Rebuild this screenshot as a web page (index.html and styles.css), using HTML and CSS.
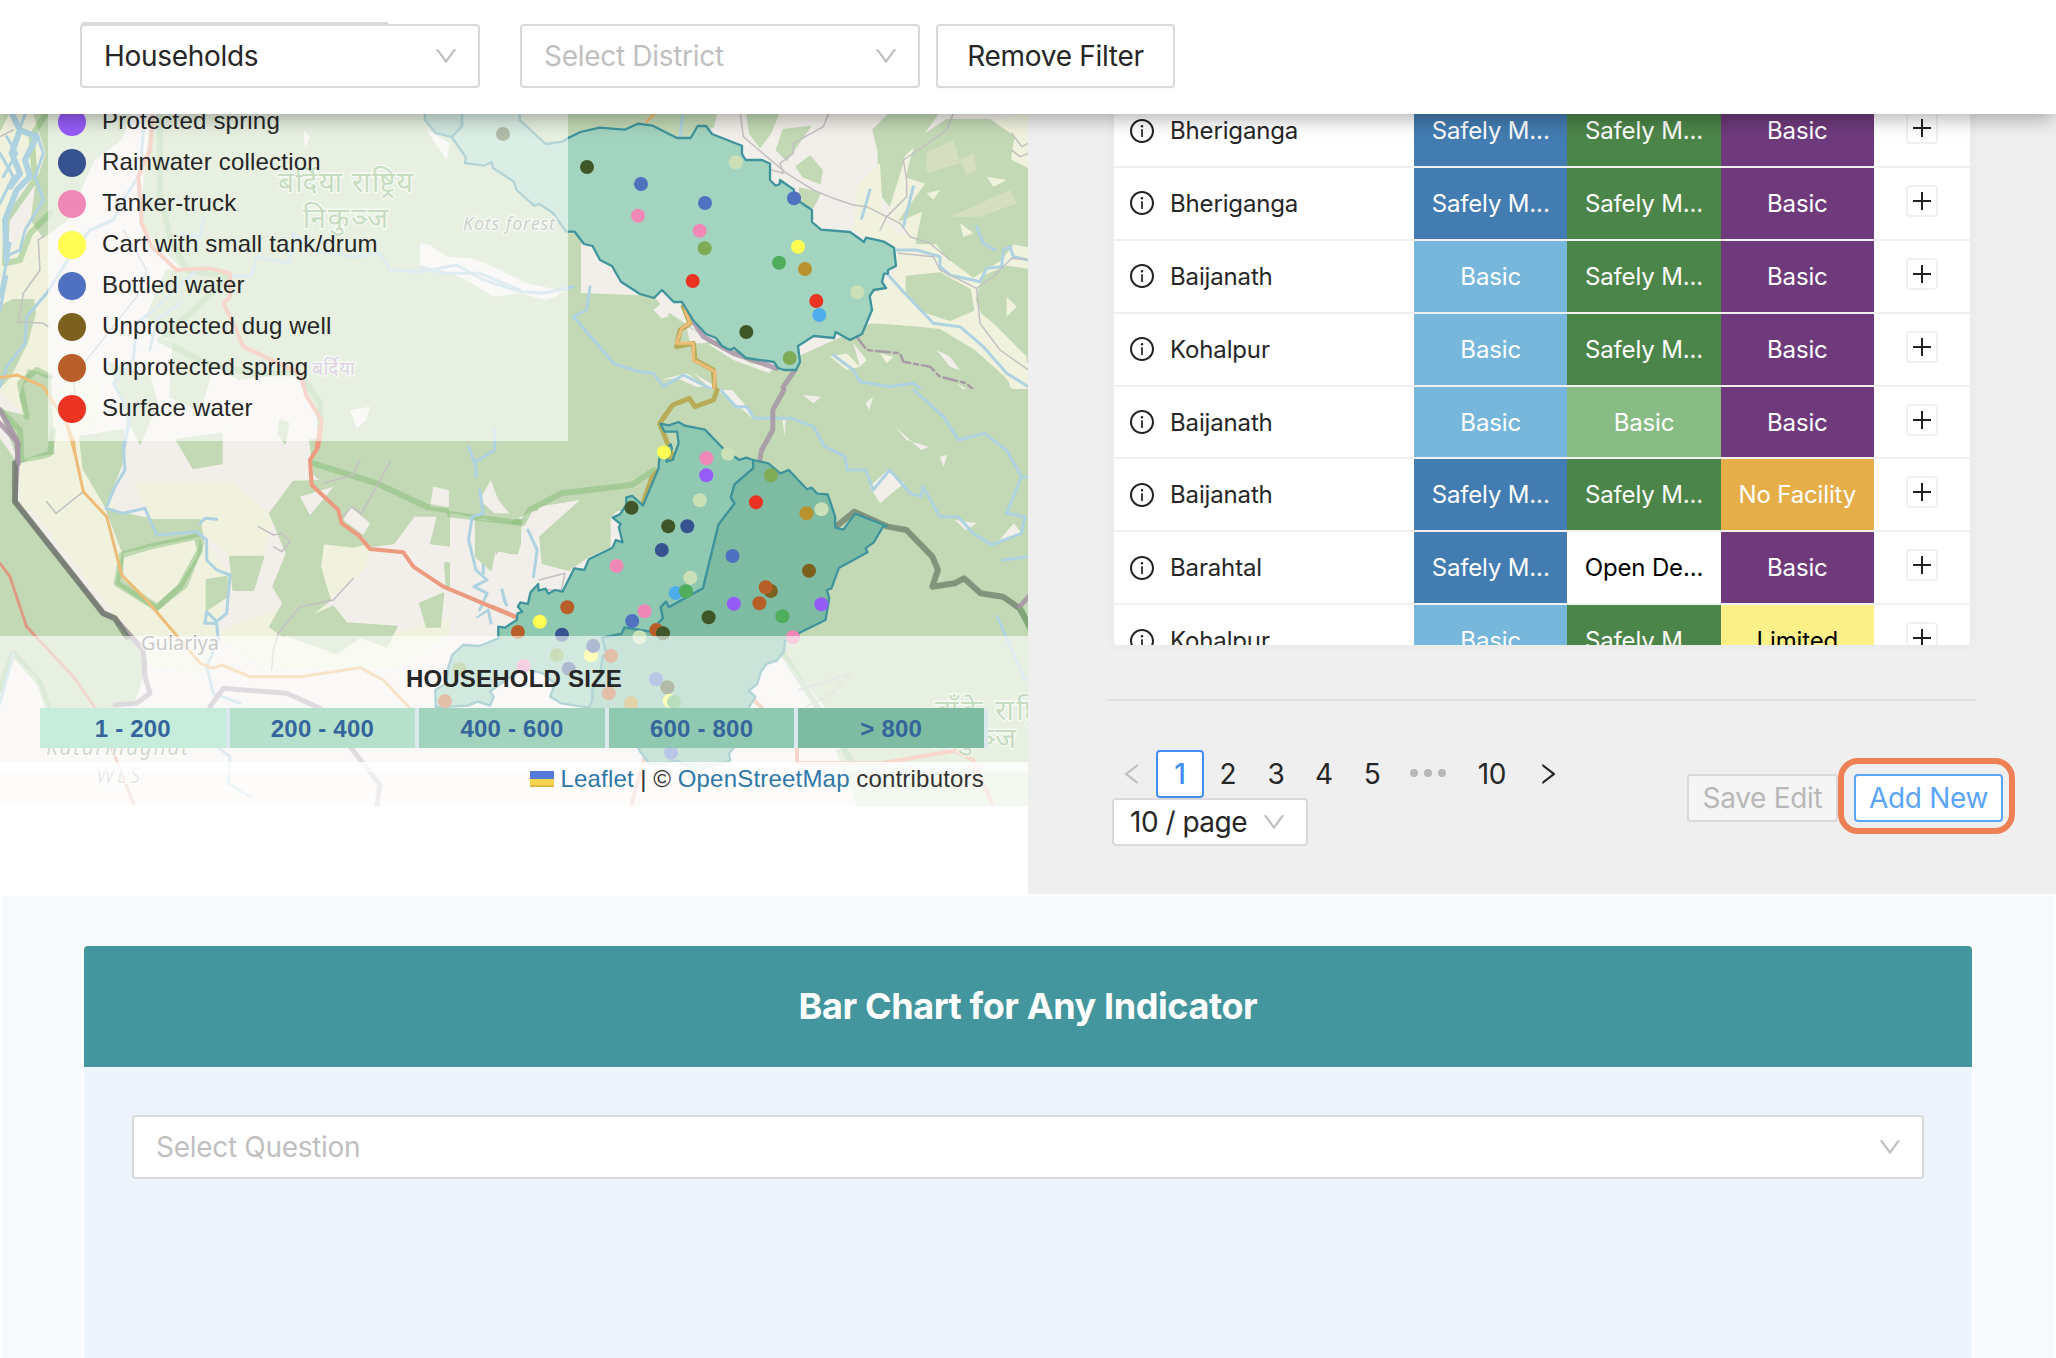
FILE: index.html
```html
<!DOCTYPE html>
<html lang="en">
<head>
<meta charset="utf-8">
<title>Households</title>
<link rel="stylesheet" href="styles.css">
</head>
<body>
<svg class="defs" width="0" height="0">
  <symbol id="down" viewBox="64 64 896 896"><path d="M884 256h-75c-5.100 0-9.900 2.500-12.900 6.600L512 654.200 227.900 262.600c-3-4.100-7.800-6.600-12.900-6.600h-75c-6.500 0-10.300 7.400-6.500 12.700l352.600 486.100c12.800 17.600 39 17.600 51.700 0l352.600-486.100c3.900-5.300.1-12.700-6.400-12.700z"/></symbol>
  <symbol id="left" viewBox="64 64 896 896"><path d="M724 218.300V141c0-6.700-7.700-10.400-12.900-6.300L260.300 486.800a31.860 31.860 0 0 0 0 50.300l450.800 352.100c5.300 4.100 12.900.4 12.900-6.300v-77.300c0-4.900-2.300-9.600-6.100-12.600l-360-281 360-281.100c3.800-3 6.100-7.700 6.100-12.600z"/></symbol>
  <symbol id="right" viewBox="64 64 896 896"><path d="M765.700 486.800L314.900 134.700A7.970 7.970 0 0 0 302 141v77.300c0 4.900 2.300 9.600 6.100 12.600l360 281.100-360 281.100c-3.900 3-6.100 7.700-6.100 12.600V883c0 6.700 7.700 10.400 12.900 6.300l450.800-352.100a31.960 31.960 0 0 0 0-50.400z"/></symbol>
  <symbol id="info" viewBox="64 64 896 896"><path d="M512 64C264.600 64 64 264.600 64 512s200.600 448 448 448 448-200.600 448-448S759.400 64 512 64zm0 820c-205.400 0-372-166.600-372-372s166.600-372 372-372 372 166.600 372 372-166.600 372-372 372z"/><path d="M464 336a48 48 0 1 0 96 0 48 48 0 1 0-96 0zm72 112h-48c-4.400 0-8 3.600-8 8v272c0 4.400 3.600 8 8 8h48c4.400 0 8-3.600 8-8V456c0-4.400-3.600-8-8-8z"/></symbol>
</svg>

<header class="filters">
  <div class="select source"><span>Households</span><svg class="caret"><use href="#down"/></svg></div>
  <div class="select district"><span class="placeholder">Select District</span><svg class="caret"><use href="#down"/></svg></div>
  <button class="btn remove">Remove Filter</button>
</header>

<main class="panes">
  <section class="map">
    <svg class="map-canvas" viewBox="0 114 1028 692">
      <rect class="land" x="0" y="114" width="1028" height="692"/>

      <!-- forests and farmland, north-west -->
      <g transform="translate(0 110) scale(.33333)">
        <path class="farm" d="M0 0H150V400L250 560 210 900 240 1000 420 1200H60L60 900 0 850z"/>
        <path class="farm" d="M150 800L300 820 300 900 240 1000 200 980z"/>
        <path class="land" d="M60 200L110 240 80 340 20 450 10 330zM150 380L280 320 420 500 300 760 150 850zM250 1000L400 990 420 1200H350z"/>
        <path class="wood" d="M100 0H400L360 90 280 150 200 330 130 380 95 330 110 220 140 130zM0 590L40 570 100 570 105 610 80 700 30 800 0 830zM85 780L150 800 160 1030 90 1040 60 1060 0 900 80 920 60 860zM0 60L20 20 30 0H0z"/>
        <path class="wood" d="M480 0H1740V1200H1060L930 1080 960 940 900 800 720 810 640 760 600 900 510 860 520 700 440 620 500 480 560 490 420 340 450 60zM240 980L370 960 370 1050 310 1200 260 1160zM330 760L450 800 470 880 420 1000 380 920zM530 990L665 970 665 1060 580 1075z"/>
        <path class="land" d="M720 810L880 790 930 880 960 960 930 1120 870 1200H760L670 1130 670 970 760 950zM1260 400L1290 405 1340 440 1420 445 1500 480 1580 520 1700 545 1640 570 1560 550 1480 560 1400 510 1340 485 1260 465zM1050 900L1110 890 1100 930 1070 955zM1050 1020L1080 1050 1110 1080 1090 1100 1050 1090zM1140 1040L1175 1050 1160 1100 1140 1090zM910 60L930 80 915 115zM1280 60L1350 100 1340 150z"/>
        <path class="wood" d="M840 930L865 940 855 1000 835 970z"/>
        <path class="soft" d="M480 0L480 250 510 380 560 480 690 500M145 0L95 80 105 210 20 330 15 460 60 450 90 370 150 310M690 500L480 690 620 760 760 790 900 790 960 880 960 960M0 900L60 960 65 1060 150 1030 160 960M80 920L60 820 110 780 150 800"/>
      </g>

      <!-- Gulariya plains -->
      <g transform="translate(0 420) scale(.33333)">
        <path class="wood" d="M0 60L50 130 50 250 310 580 400 640 440 730 400 850 350 860 300 900 150 870 110 770 40 700 0 820z"/>
        <path class="farm" d="M60 130L220 100 320 270 450 300 600 340 690 470 650 640 620 760 460 740 420 670 340 580 70 240z"/>
        <path class="farm" d="M400 190L700 190 820 290 770 480 690 410 610 340 450 290zM960 360L1110 370 1100 440 1040 500 990 530 950 440zM640 640L850 560 1000 560 1100 660 1480 560 1200 740 800 750z"/>
        <path class="wood" d="M320 270L460 300 600 300 610 370 560 500 470 570 350 490 370 400zM690 410L790 410 760 510 700 510zM880 185L1050 180 1100 370 1060 380 970 370 960 440 990 540 850 650 810 620 850 550 820 500 860 400 810 280zM860 620L1000 560 1040 610 1190 620 1160 680 1080 650 1010 700 860 645zM1260 550L1330 520 1320 620 1280 620zM1335 430L1390 430 1380 510 1340 500zM930 60H1560V270L1410 300 1380 380 1290 370 1240 290 1180 370 1100 380 1090 340 1010 280 1050 180 940 140zM1470 290L1560 300 1560 400 1490 400zM620 480L680 470 680 530 620 570z"/>
        <path class="farm" d="M370 400L450 380 600 350 590 410 540 490 470 550 370 480z"/>
        <path class="land" d="M900 230L1000 200 960 250 930 285zM1300 200L1390 220 1390 270 1290 260zM1240 290L1310 290 1290 370 1240 370zM1440 200L1480 180 1490 220 1540 260 1470 280zM1050 260L1110 310 1090 345 1030 300z"/>
        <path class="soft" d="M350 490L365 405 450 380 590 350 600 390 540 500 470 565zM940 130L1130 190 1280 260 1560 305M350 490L430 540M0 810L40 700 120 790 150 880"/>
        <path class="river" d="M390 0L370 80 375 150 345 200 318 265 370 280 435 265 470 345 590 335 620 360 620 420 650 450 690 465 680 580 650 605 620 575 615 610 650 610 655 660 620 740 640 820 720 850M600 310L615 295 650 298M1410 80L1430 130 1430 170M1480 30L1480 80 1430 130M1440 200L1450 260 1410 290 1415 380 1450 420 1450 480 1425 500 1465 490 1440 540 1430 590 1465 570 1475 620M1500 510L1520 555M40 700L0 850M650 980L690 1010 685 1090 750 1130"/>
        <path class="track" d="M140 245L168 280 250 215M775 320L820 345 845 340 870 365 845 395 820 380M835 640L900 560 1000 540 1060 475M815 750L820 690 835 640M970 190L1060 165 1080 120M1030 290L1055 260 1085 280 1170 125"/>
        <path class="border-line" d="M0 10L55 70 45 245 310 580 345 595 430 690 435 770 450 820 410 850 345 855M630 860L670 805 860 820 960 865 1140 1095 1130 1160"/>
        <path class="border-shade" d="M45 130V245L310 580 345 595 380 650"/>
        <path class="secondary" d="M195 0L220 60 225 100 250 215 320 290 365 465 435 535 575 700 600 730 640 745 665 735 750 770 900 770 1080 743 1150 780 1230 865 1420 985 1560 1070"/>
        <path class="primary" d="M965 0L955 80 930 120 935 195 1015 270 1025 310 1075 345 1110 387 1210 397 1240 440 1330 500 1560 595"/>
        <path class="primary thin" d="M0 430L30 470 80 620 220 770 290 870 400 1150"/>
      </g>

      <!-- upper left rivers and roads -->
      <g transform="translate(0 110) scale(.33333)">
        <path class="river thick" d="M30 0L60 60 35 130 60 190 30 230M60 60L110 80 75 150 90 200 50 240 15 330 20 450"/>
        <path class="river" d="M0 130L40 200 0 280M20 80L50 130 10 200M80 0L50 80M110 70L130 130 105 200 130 270 75 360 60 420 15 440M0 560L30 400M0 600L20 500M430 60L420 190 370 270 340 330 270 360 210 440 140 550 80 620 75 700 20 770 0 830M690 500L755 495 770 440 870 460 880 370 940 420 1060 440 1140 430 1170 480 1260 485 1370 465 1450 510 1560 545 1630 550 1720 530M1260 470L1330 490 1440 490 1560 540M590 480L460 600 410 640 400 750 340 820 390 910 370 1030M540 580L470 630 450 720M540 370L600 380 610 325"/>
        <path class="track" d="M0 80L40 60M130 380L115 390 120 480 70 550 55 635 130 640 145 650M370 360L440 480 410 560 220 800 225 850"/>
        <path class="primary" d="M460 0L450 120 415 200 425 340 455 410 530 480 630 475 690 490 690 560 670 580 705 650 730 710 900 790 920 860 965 930 950 1010"/>
        <path class="secondary" d="M0 803L50 795 130 830 200 940 225 1030"/>
        <path class="border-line" d="M0 900L50 990 55 1060"/>
      </g>

      <!-- eastern hills -->
      <g transform="translate(640 110) scale(.33333)">
        <path class="wood" d="M-240 0H230L220 50 120 90 -240 110zM320 0L420 0 390 70 360 110 330 70zM430 60L510 50 440 150 410 120zM510 140L545 180 540 220 490 200 470 170zM480 235L540 250 520 290 480 290zM700 60L760 0 900 0 830 100 790 140 800 230 760 300 720 250 715 120z"/>
        <path class="farm" d="M650 230L720 160 730 330 780 370 900 410 1170 400V850L900 700 700 650 690 560 780 470 640 360zM740 320L800 130 1170 0V430L890 430z"/>
        <path class="wood" d="M830 90L920 30 1050 30 1120 80 1110 150 1170 180V410L1120 400 1080 450 1000 500 920 440 890 400 830 400 850 300 780 330 860 220 800 200zM800 500L900 490 990 540 1000 600 930 630 840 600 800 550zM1030 500L1100 470 1170 480V760L1110 720 1040 640 1010 570zM700 640L900 660 1000 720 1090 800 1170 900V1200H-240V550L40 560 70 600 190 680 400 780 480 740z"/>
        <path class="rock" d="M860 130L940 90 960 160 860 190zM960 150L1000 130 1010 180 980 195zM930 320L1110 240 1130 280 1020 320z"/>
        <path class="farm" d="M700 610L830 600 900 640 860 650 690 640zM1010 600L1060 640 1160 740V800L1080 740z"/>
        <path class="land" d="M40 600L90 560 85 620 65 625zM140 650L220 690 190 700 150 700zM160 790L230 830 300 870 360 890 350 920 300 890 240 860zM200 700L270 720 330 760 400 770 390 790 280 750zM480 860L540 860 520 880zM60 810L140 790 200 830 170 830 110 805zM580 890L600 880 610 900zM680 960L700 955 695 980zM740 880L790 890 820 930 800 925zM970 970L1030 975 990 995zM420 930L435 935 430 975zM890 720L930 740 960 780 930 770zM1040 850L1110 880 1160 920 1130 920zM640 700L680 750 660 770z"/>
        <path class="farm" d="M570 740L620 730 660 770 620 780zM720 730L760 740 740 760zM950 820L1020 860 1000 870zM1100 790L1160 850 1160 880 1110 830zM790 340L830 380 800 380zM1040 200L1100 210 1060 230zM960 340L1000 370 970 380zM1100 560L1130 590 1100 620zM860 250L900 240 880 270z"/>
        <path class="river" d="M770 420L830 420 900 440 900 470 930 495 1020 515 1040 475 1085 470 1090 420 1110 410 1120 440 1165 450M740 490L790 545 880 640 960 650 1030 710 1100 790 1165 830M580 735L640 780 660 815 750 830 820 820 870 860 930 980 1020 970 1070 990 1100 1040M-200 620L-160 600 -150 530M-200 620L-130 700 -80 760 -20 780 0 785 40 790 70 830 130 795 200 830 250 855 300 895 330 875 335 910 390 930 510 940 530 980 580 1020M130 0L120 80M690 240L665 325M1010 350L1030 400 1065 420M820 230L790 350"/>
        <path class="track" d="M300 0L310 80 380 140 440 190 520 240 580 265 640 285 680 290 780 340 810 380 870 400 930 450M570 0L550 50 460 100 460 130 420 160 430 190 360 170M940 10L920 60 850 110 790 150 800 210 800 260 740 320 720 360M775 430L880 440 900 480 1010 535 1060 500 1115 445 1165 450M1010 535L1020 640 1080 720 1165 780M1115 70L1145 110 1165 100M1115 120L1140 140 1165 130"/>
        <path class="border-dash" d="M650 680L680 720 780 730 790 755 870 770 900 800 980 820 1010 850 1060 855 1110 885 1165 930"/>
        <path class="border-line" d="M465 780L430 830 425 860 395 910 395 970 370 1000 345 1080 330 1130M130 590L190 680 280 730 410 775"/>
        <path class="gold-soft" d="M130 590L150 640 120 660 110 710 160 700 165 750 220 780 225 850 215 870 160 890 150 870 100 885 60 935"/>
        <path class="secondary" d="M135 600L150 640 125 655 110 700 160 700 160 750 225 785 220 870 165 885 110 880 65 935M55 0L20 35"/>
      </g>

      <!-- southern woods, rivers and borders around the districts -->
      <g transform="translate(450 390) scale(.37106 .33333)">
        <path class="wood" d="M0 0H1570V1250H1100L1000 950 900 800 700 600 480 330 430 380 430 470 370 500 320 540 250 520 240 400 350 330 240 350 150 400 40 370 0 390z"/>
        <path class="land" d="M720 0L790 60 820 90 800 50 760 0zM110 270L130 330 160 370 120 370 80 330zM210 400L240 460 240 520 170 600 120 640 0 740V370L60 380 80 480 60 540 110 560 130 480 180 500zM1130 290L1180 240 1225 280 1190 310 1160 340zM240 350L350 330 280 400 210 470zM950 15L1000 20 980 40zM1360 390L1420 400 1390 420zM895 80L905 85 902 140zM1480 450L1520 400 1540 430zM1120 40L1140 20 1130 60zM1200 110L1230 150 1290 170 1270 180zM1320 200L1340 195 1330 230z"/>
        <path class="wood" d="M70 390L190 410 180 490 120 480 110 540 70 500z"/>
        <path class="land" d="M0 740L180 680 420 740 300 960 480 1060 530 1120 760 1110 830 1250H0zM890 790L1010 950 1060 1080 950 1060 860 880z"/>
        <path class="soft" d="M0 373L195 400 215 360 300 310 490 285 550 240M885 770L990 950 1080 1110"/>
        <path class="river" d="M50 170L70 230 70 260M120 115V180L70 215M80 300L90 370 60 380 50 450 70 540 100 570 65 590 100 610 80 660M210 420L235 480 225 560M140 600L150 640M730 0L770 50 800 50 820 85 920 85 980 110 1010 170 1065 200 1070 240 1120 240 1140 300 1185 240 1240 310 1270 320 1275 290 1320 380 1370 380 1410 430 1460 465 1540 430 1550 380 1500 370 1540 260 1500 180 1440 130 1370 150 1330 80 1250 0M1490 510L1560 500M1540 260L1563 262M1475 680L1510 770 1550 870"/>
        <path class="track" d="M240 570L310 550 300 600 260 600M940 900L1080 850 1030 910 960 950"/>
        <path class="border-shade" d="M1040 410L1090 365 1180 410 1230 420 1300 500 1315 540 1300 590 1360 580 1385 565 1430 610 1490 620 1535 655 1563 710"/>
        <path class="border-line" d="M900 0L870 60 870 120 840 180 835 210M1535 650L1563 615"/>
        <path class="gold-soft" d="M720 0L710 30 660 50 645 25 600 45 565 100 600 200 545 260 520 340"/>
        <path class="primary" d="M0 598L178 682M820 930L845 960 935 1060 935 1120 1160 1120 1360 1082 1410 1110 1460 1240M525 1100L490 1240"/>
        <path class="soft" d="M1540 660L1563 720"/>
      </g>

      <!-- district areas -->
      <path class="area a3" d="M545.700 144L562.600 141.700 568 138 580.400 132 599.600 127.700 624.500 129.700 638 123.700 652.700 125.700 677 138H690.700L697.700 126H706L712 134 742 145.700V154L745.700 160H762L770 163.700V180L775.700 185.700 779.700 184 780 180 794 189.700V198L812 210V222L821 229.700 850 232 864 242 866 237.700 884 241.700 894 247.700 896 266 888 270V273.700H884L882 282 886 288 873.700 290 869.700 296 872 310 862 334 850 340 835.700 332 834 338 813.700 336 798 346 800 362 796 370H784L778 368 774 362 746 358 734 348 730 350 722 346 716 338 706 334 693.700 321 682 302H673.700L662 290 654 298 640 294 621 281.700 612 266 600 260 592.600 246 584 244 574.700 231.700H566L553 213 539.600 204 534 205.700 516.600 190 514 181.700 493 168 491.800 162 484 165.700 465 163 465.700 157 451.600 137 462 126V100H519.700V120z"/>
      <path class="area a4" d="M424.800 100V120L436 133 451.600 137 462 126V100z"/>
      <g transform="translate(450 390) scale(.37106 .33333)">
        <path class="area a4" d="M567 101L590 106 616 96 633 107 687 119 740 180 780 210 798 203 817 210V235L767 283 757 322 767 341 724 403 682 595 590 652 582 635 568 652 574 685 540 725 470 713 462 732 410 744 422 790 412 800 405 850 384 900V930L374 953 300 940 270 920 283 880 250 850 200 835 150 870 108 905 118 920 108 947 75 935 48 947 -38 952 -40 900 -9 880 -5 835 6 795 35 765 80 768 130 745V710L148 713 180 690 182 670 195 665 183 650 190 637 210 642 217 607 238 582V602L258 596 265 611 283 600 303 605 335 535 362 540 374 508 438 473 447 450 465 457 455 412 460 402 438 383 458 373 475 345V322L492 318 520 347 562 235 565 195 595 163 598 175 583 215 600 210 616 160 612 125H578z"/>
        <path class="area a5" d="M817 210L858 220 890 250 913 240 962 298 975 293 990 311 1018 313 1038 380V413L1060 419 1092 371 1177 408H1168L1142 457 1120 475 1125 487 1048 534 1028 595 1016 600 1022 625 1012 690 945 727 903 752 900 785 880 812 853 822 838 845 828 882 805 902 823 920 805 953 790 1010 765 1074 752 1090 755 1112 680 1135 630 1125 615 1112 540 1125 512 1085 508 1074 374 1000V953L384 930V900L405 850 412 800 422 790 410 744 462 732 470 713 540 725 574 685 568 652 582 635 590 652 682 595 724 403 767 341 757 322 767 283 817 235z"/>
      </g>

      <!-- water points -->
      <g class="dark"><circle cx="503" cy="134" r="7"/><circle cx="587" cy="167" r="7"/><circle cx="746.300" cy="332" r="7"/><circle cx="631.500" cy="507.700" r="7"/><circle cx="668.200" cy="526.300" r="7"/><circle cx="708.600" cy="617.300" r="7"/><circle cx="667.400" cy="687.300" r="7"/></g>
      <g class="blue"><circle cx="641" cy="184" r="7"/><circle cx="705" cy="203" r="7"/><circle cx="794" cy="198.300" r="7"/><circle cx="732.500" cy="556" r="7"/><circle cx="632.200" cy="621" r="7"/><circle cx="656" cy="679.300" r="7"/><circle cx="671" cy="752.700" r="7"/></g>
      <g class="pink"><circle cx="638" cy="215.700" r="7"/><circle cx="699.700" cy="230.700" r="7"/><circle cx="706.500" cy="458.300" r="7"/><circle cx="616.500" cy="566" r="7"/><circle cx="793" cy="637.300" r="7"/><circle cx="644.500" cy="611.300" r="7"/><circle cx="523.500" cy="666" r="7"/></g>
      <g class="olive"><circle cx="704.700" cy="248.300" r="7"/><circle cx="789.700" cy="358" r="7"/><circle cx="771" cy="475.300" r="7"/><circle cx="556.900" cy="655" r="7"/><circle cx="459.300" cy="669.300" r="7"/></g>
      <g class="red"><circle cx="692.700" cy="281" r="7"/><circle cx="816.300" cy="301" r="7"/><circle cx="756" cy="502.300" r="7"/></g>
      <g class="pale"><circle cx="735.700" cy="162.300" r="7"/><circle cx="857.300" cy="292.300" r="7"/><circle cx="728" cy="453.700" r="7"/><circle cx="699.800" cy="500.300" r="7"/><circle cx="690.300" cy="577.700" r="7"/><circle cx="821.500" cy="509.300" r="7"/><circle cx="639.600" cy="637.300" r="7"/></g>
      <g class="yellow"><circle cx="798" cy="246.700" r="7"/><circle cx="664" cy="452.300" r="7"/><circle cx="539.800" cy="621.700" r="7"/><circle cx="591" cy="655.300" r="7"/><circle cx="669.700" cy="700.700" r="7"/></g>
      <g class="sky"><circle cx="819.300" cy="315" r="7"/><circle cx="675.700" cy="593" r="7"/></g>
      <g class="green"><circle cx="779" cy="262.700" r="7"/><circle cx="686" cy="591.300" r="7"/><circle cx="782.300" cy="616.300" r="7"/><circle cx="674" cy="702" r="7"/></g>
      <g class="mustard"><circle cx="805" cy="269" r="7"/><circle cx="806.500" cy="513.300" r="7"/><circle cx="631" cy="703.300" r="7"/></g>
      <g class="purple"><circle cx="706.300" cy="475.300" r="7"/><circle cx="733.800" cy="603.700" r="7"/><circle cx="821.300" cy="604.300" r="7"/></g>
      <g class="navy"><circle cx="687.300" cy="526.300" r="7"/><circle cx="661.800" cy="550" r="7"/><circle cx="562" cy="634.700" r="7"/><circle cx="593.200" cy="646" r="7"/><circle cx="568.700" cy="668.700" r="7"/></g>
      <g class="brown"><circle cx="809" cy="570.700" r="7"/><circle cx="770.800" cy="591" r="7"/></g>
      <g class="rust"><circle cx="765.800" cy="587.300" r="7"/><circle cx="759.400" cy="603.300" r="7"/><circle cx="656.300" cy="630" r="7"/><circle cx="567.300" cy="607.300" r="7"/><circle cx="517.900" cy="632" r="7"/><circle cx="611" cy="655.700" r="7"/><circle cx="445" cy="701" r="7"/><circle cx="608.800" cy="693.300" r="7"/></g>
      <g class="dark"><circle cx="663" cy="633.300" r="7"/></g>

      <!-- place names -->
      <g class="place park"><text x="278" y="192" textLength="135">बर्दिया राष्ट्रिय</text><text x="303" y="228" textLength="85">निकुञ्ज</text><text x="935" y="720" textLength="124">बाँके राष्ट्रिय</text><text x="931" y="748" textLength="85">निकुञ्ज</text></g>
      <text class="place district-name" x="312" y="375" textLength="43">बर्दिया</text>
      <text class="place forest-name" x="463" y="230" textLength="92">Kots forest</text>
      <text class="place town-name" x="141" y="650" textLength="78">Gulariya</text>
      <text class="place reserve" x="46" y="755" textLength="142">Katarniaghat</text>
      <text class="place reserve" x="96" y="783" textLength="44">WLS</text>
    </svg>

    <ul class="legend">
      <li><i class="purple"></i>Protected spring</li>
      <li><i class="navy"></i>Rainwater collection</li>
      <li><i class="pink"></i>Tanker-truck</li>
      <li><i class="yellow"></i>Cart with small tank/drum</li>
      <li><i class="blue"></i>Bottled water</li>
      <li><i class="brown"></i>Unprotected dug well</li>
      <li><i class="rust"></i>Unprotected spring</li>
      <li><i class="red"></i>Surface water</li>
    </ul>

    <div class="sizes">
      <h3>HOUSEHOLD SIZE</h3>
      <div class="scale"><span class="s1">1 - 200</span><span class="s2">200 - 400</span><span class="s3">400 - 600</span><span class="s4">600 - 800</span><span class="s5">&gt; 800</span></div>
    </div>
    <div class="attribution"><svg class="flag" viewBox="0 0 24 16"><path fill="#567ada" d="M0 0h24v8H0z"/><path fill="#f7d64b" d="M0 8h24v8H0z"/><path fill="#ddba3f" d="M0 14h24v2H0z"/></svg><a>Leaflet</a><span>|</span><span>©</span><a>OpenStreetMap</a><span>contributors</span></div>
  </section>

  <section class="data">
    <div class="table-frame">
      <div class="table">
        <div class="row"><div class="name"><svg class="info"><use href="#info"/></svg>Bheriganga</div><div class="cell safe-water">Safely M...</div><div class="cell safe-san">Safely M...</div><div class="cell hyg">Basic</div><div class="more"><b></b></div></div>
        <div class="row"><div class="name"><svg class="info"><use href="#info"/></svg>Bheriganga</div><div class="cell safe-water">Safely M...</div><div class="cell safe-san">Safely M...</div><div class="cell hyg">Basic</div><div class="more"><b></b></div></div>
        <div class="row"><div class="name"><svg class="info"><use href="#info"/></svg>Baijanath</div><div class="cell basic-water">Basic</div><div class="cell safe-san">Safely M...</div><div class="cell hyg">Basic</div><div class="more"><b></b></div></div>
        <div class="row"><div class="name"><svg class="info"><use href="#info"/></svg>Kohalpur</div><div class="cell basic-water">Basic</div><div class="cell safe-san">Safely M...</div><div class="cell hyg">Basic</div><div class="more"><b></b></div></div>
        <div class="row"><div class="name"><svg class="info"><use href="#info"/></svg>Baijanath</div><div class="cell basic-water">Basic</div><div class="cell basic-san">Basic</div><div class="cell hyg">Basic</div><div class="more"><b></b></div></div>
        <div class="row"><div class="name"><svg class="info"><use href="#info"/></svg>Baijanath</div><div class="cell safe-water">Safely M...</div><div class="cell safe-san">Safely M...</div><div class="cell none">No Facility</div><div class="more"><b></b></div></div>
        <div class="row"><div class="name"><svg class="info"><use href="#info"/></svg>Barahtal</div><div class="cell safe-water">Safely M...</div><div class="cell open">Open De...</div><div class="cell hyg">Basic</div><div class="more"><b></b></div></div>
        <div class="row"><div class="name"><svg class="info"><use href="#info"/></svg>Kohalpur</div><div class="cell basic-water">Basic</div><div class="cell safe-san">Safely M...</div><div class="cell limited">Limited</div><div class="more"><b></b></div></div>
      </div>
    </div>
    <hr>
    <div class="footer">
      <div class="paging">
        <div class="pages"><span class="muted"><svg class="caret"><use href="#left"/></svg></span><span class="current">1</span><span>2</span><span>3</span><span>4</span><span>5</span><span class="gap"><i></i><i></i><i></i></span><span class="wide">10</span><span><svg class="caret"><use href="#right"/></svg></span></div>
        <div class="select per-page"><span>10 / page</span><svg class="caret"><use href="#down"/></svg></div>
      </div>
      <div class="actions">
        <button class="btn save">Save Edit</button>
        <div class="callout"><button class="btn add">Add New</button></div>
      </div>
    </div>
  </section>
</main>

<section class="charts">
  <div class="card">
    <h2>Bar Chart for Any Indicator</h2>
    <div class="card-body"><div class="select question"><span class="placeholder">Select Question</span><svg class="caret"><use href="#down"/></svg></div></div>
  </div>
</section>
</body>
</html>
```
FILE: styles.css
```css
* { box-sizing: border-box; }
body { margin: 0; width: 2056px; height: 1358px; overflow: hidden; display: flex; flex-direction: column; background: #fff; color: #262626; font: 28px/1.2 Inter, "Noto Sans", sans-serif; letter-spacing: -.3px; }
.defs { position: absolute; }

.filters { position: relative; z-index: 5; flex: none; height: 114px; padding: 24px 80px; display: flex; align-items: flex-start; background: #fff; box-shadow: 0 8px 18px -3px rgba(0,0,0,.3); }
.select { display: flex; align-items: center; justify-content: space-between; height: 64px; padding: 2px 20px 0 22px; background: #fff; border: 2px solid #d9d9d9; border-radius: 4px; }
.caret { width: 24px; height: 24px; margin-top: -2px; fill: #bfbfbf; }
.placeholder { color: #bfbfbf; }
.source, .district { width: 400px; }
.source { position: relative; margin-right: 40px; }
.source::before { content: ""; position: absolute; left: -1px; top: -4px; width: 308px; height: 3px; border-radius: 3px 3px 0 0; background: #d9d9d9; }
.district { margin-right: 16px; }
.btn { margin: 0; padding: 2px 0 0; font: inherit; letter-spacing: inherit; color: inherit; background: #fff; border: 2px solid #d9d9d9; border-radius: 4px; }
.remove { width: 239px; height: 64px; box-shadow: 0 4px 0 rgba(0,0,0,.016); }

.panes { flex: none; height: 780px; display: grid; grid-template-columns: 1028px 1028px; }

.map { position: relative; height: 692px; overflow: hidden; font-family: "Liberation Sans", Arial, sans-serif; font-size: 24px; letter-spacing: .2px; }
.map-canvas { display: block; width: 1028px; height: 692px; letter-spacing: 0; }
.land { fill: #f2efea; }
.farm { fill: #f0f2de; }
.wood { fill: #c3d9b5; stroke: #c3d9b5; stroke-width: 6; stroke-linejoin: round; }
.rock { fill: #d5dfbf; }
.river, .track, .primary, .secondary, .soft, .border-line, .border-shade, .border-dash, .gold-soft { fill: none; stroke-linejoin: round; stroke-linecap: round; vector-effect: non-scaling-stroke; }
.river { stroke: #aed2e0; stroke-width: 3; }
.river.thick { stroke-width: 6; }
.track { stroke: #c3c0c3; stroke-width: 1.5; }
.primary { stroke: #ec9a80; stroke-width: 4; }
.primary.thin { stroke: #dd9b83; stroke-width: 3; }
.secondary { stroke: #edbc78; stroke-width: 3; }
.soft { stroke: #7fba72; stroke-opacity: .45; stroke-width: 6; }
.border-line { stroke: #a590a5; stroke-opacity: .8; stroke-width: 5; }
.border-shade { stroke: #60705d; stroke-opacity: .65; stroke-width: 6; }
.border-dash { stroke: #a99ba5; stroke-width: 2.5; stroke-dasharray: 14 4 4 4; }
.gold-soft { stroke: #b7ad59; stroke-width: 5; }
.area { stroke: #3f949c; stroke-width: 2.3; stroke-linejoin: round; vector-effect: non-scaling-stroke; }
.a3 { fill: #a3d4bf; }
.a4 { fill: #90c9b2; }
.a5 { fill: #7dbba3; }
.place { font-family: "Noto Sans", sans-serif; stroke: #fff; stroke-opacity: .6; stroke-width: 3; paint-order: stroke; }
.park { font-size: 28px; fill: #71ab63; }
.district-name { font-size: 19px; fill: #b08fb8; }
.forest-name { font-size: 18px; font-style: italic; fill: #888a80; }
.town-name { font-size: 20px; fill: #777; }
.reserve { font-size: 21px; font-style: italic; fill: #8d9c87; }

.purple { fill: #955cf8; background: #955cf8; }
.navy { fill: #36528f; background: #36528f; }
.pink { fill: #f088b7; background: #f088b7; }
.yellow { fill: #fffd54; background: #fffd54; }
.blue { fill: #5071c0; background: #5071c0; }
.brown { fill: #7b611d; background: #7b611d; }
.rust { fill: #b85f29; background: #b85f29; }
.red { fill: #eb3323; background: #eb3323; }
.dark { fill: #3f5728; }
.olive { fill: #7fab57; }
.pale { fill: #cbe0b7; }
.sky { fill: #4fadec; }
.green { fill: #4fad5b; }
.mustard { fill: #b9912f; }

.legend { position: absolute; left: 48px; top: -13px; width: 520px; height: 340px; margin: 0; padding: 0 10px; list-style: none; background: rgba(255,255,255,.6); }
.legend li { display: flex; align-items: center; gap: 16px; height: 41px; }
.legend i { width: 28px; height: 28px; border-radius: 50%; }

.sizes { position: absolute; left: 0; right: 0; bottom: 34px; height: 136px; padding: 29px 40px 0; background: rgba(255,255,255,.6); }
.sizes h3 { margin: 0 0 15px; font-size: 24px; line-height: 28px; letter-spacing: .2px; text-align: center; }
.scale { display: grid; grid-template-columns: repeat(5, 1fr); }
.scale span { height: 40px; line-height: 42px; text-align: center; font-weight: bold; color: #34659b; border-right: 4px solid #dbe8ee; }
.s1 { background: #c6ecdb; }
.s2 { background: #b4e0cc; }
.s3 { background: #a2d3bf; }
.s4 { background: #90c9b2; }
.s5 { background: #7dbba3; }
.attribution { position: absolute; left: 0; right: 0; bottom: 0; height: 44px; padding: 0 44px 10px 0; display: flex; align-items: center; justify-content: flex-end; gap: 6.500px; color: #333; background: rgba(255,255,255,.8); }
.attribution a { color: #2f78a8; }
.flag { width: 24px; height: 16px; }

.data { height: 780px; padding: 0 80px; background: #efefef; }
.table-frame { height: 531px; margin: 0 6px; overflow: hidden; border-radius: 0 0 4px 4px; background: #fff; outline: 6px solid #ececec; }
.table { margin-top: -18.800px; font-size: 24px; letter-spacing: -.15px; }
.row { display: grid; grid-template-columns: 300px repeat(3, 153.333px) 96px; height: 72.850px; border-bottom: 2px solid #f0f0f0; }
.name { display: flex; align-items: center; padding: 2px 0 0 16px; gap: 16px; }
.info { width: 24px; height: 24px; margin-top: -2px; fill: #222; }
.cell { display: flex; align-items: center; justify-content: center; padding-top: 2px; color: #fff; white-space: nowrap; }
.safe-water { background: #437cb1; }
.basic-water { background: #76b7db; }
.safe-san { background: #4c8549; }
.basic-san { background: #89bc84; }
.hyg { background: #6e3a7b; }
.none { background: #e6ae49; }
.open { color: #000; }
.limited { color: #000; background: #fcf089; }
.more { display: flex; justify-content: center; align-items: flex-start; padding-top: 17px; }
.more b { width: 32px; height: 32px; border: 2px solid #f0f0f0; border-radius: 4px; background: linear-gradient(#222, #222) center / 18px 2px no-repeat, linear-gradient(#222, #222) center / 2px 18px no-repeat, #fff; }

.data hr { height: 2px; margin: 54px 0 49px; border: 0; background: #e0e0e0; }
.footer { display: flex; justify-content: space-between; margin-right: -39px; }
.pages { display: flex; height: 48px; }
.pages span { width: 48px; padding-top: 2px; display: flex; align-items: center; justify-content: center; }
.pages .caret { fill: #262626; }
.pages .muted .caret { fill: #bfbfbf; }
.pages .wide, .pages .gap { width: 64px; }
.pages .gap { gap: 6px; }
.pages .gap i { width: 8px; height: 8px; margin-bottom: 4px; border-radius: 50%; background: #b8b8b8; }
.pages .current { color: #418ef7; font-weight: 500; background: #fff; border: 2px solid #418ef7; border-radius: 4px; }
.per-page { width: 196px; height: 48px; margin-left: 4px; padding: 2px 20px 0 16px; letter-spacing: -.5px; }
.actions { display: flex; align-items: center; height: 76px; margin-top: 8px; }
.save { width: 151px; height: 48px; margin-top: 4px; color: #b8b8b8; background: #f5f5f5; }
.callout { display: flex; width: 177px; height: 76px; padding: 10px 6px 6px 10px; border: 6px solid #ee8055; border-radius: 20px; }
.add { width: 149px; height: 48px; color: #5aa5f8; border-color: #5aa5f8; }

.charts { flex: 1; margin: 2px 2px 0; padding: 48px 80px 0; background: #f6fafd; }
.card { height: 440px; border: 2px solid #fff; border-radius: 6px; background: #edf4fc; }
.card h2 { margin: 0; height: 122px; line-height: 120px; text-align: center; font-size: 36px; letter-spacing: -.4px; color: #fff; background: #43969d; border-bottom: 1px solid #f0f3f7; border-radius: 4px 4px 0 0; }
.card-body { padding: 47px 48px; }
```
